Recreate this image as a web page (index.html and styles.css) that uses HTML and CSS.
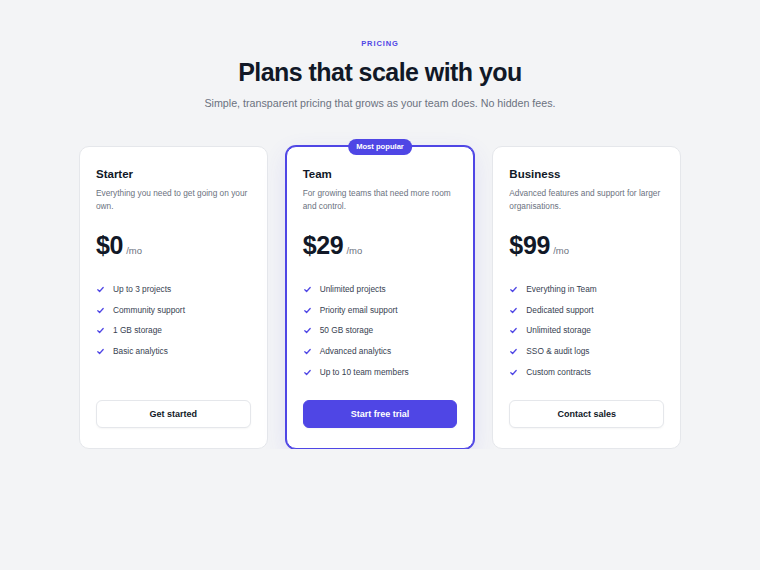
FILE: index.html
```html
<!DOCTYPE html>
<html lang="en">
<head>
  <meta charset="UTF-8">
  <meta name="viewport" content="width=device-width, initial-scale=1.0">
  <title>Pricing</title>
  <link rel="stylesheet" href="styles.css">
</head>
<body>
  <main class="pricing">
    <header class="intro">
      <p class="eyebrow">Pricing</p>
      <h1>Plans that scale with you</h1>
      <p class="lead">Simple, transparent pricing that grows as your team does. No hidden fees.</p>
    </header>

    <div class="plans">
      <div class="plan">
        <h3>Starter</h3>
        <p class="desc">Everything you need to get going on your own.</p>
        <div class="price">$0<span>/mo</span></div>
        <ul class="features">
          <li><svg viewBox="0 0 10 10"><path d="M2 5.2l2 2 4-4.4"/></svg>Up to 3 projects</li>
          <li><svg viewBox="0 0 10 10"><path d="M2 5.2l2 2 4-4.4"/></svg>Community support</li>
          <li><svg viewBox="0 0 10 10"><path d="M2 5.2l2 2 4-4.4"/></svg>1 GB storage</li>
          <li><svg viewBox="0 0 10 10"><path d="M2 5.2l2 2 4-4.4"/></svg>Basic analytics</li>
        </ul>
        <button class="btn">Get started</button>
      </div>

      <div class="plan featured">
        <span class="badge">Most popular</span>
        <h3>Team</h3>
        <p class="desc">For growing teams that need more room and control.</p>
        <div class="price">$29<span>/mo</span></div>
        <ul class="features">
          <li><svg viewBox="0 0 10 10"><path d="M2 5.2l2 2 4-4.4"/></svg>Unlimited projects</li>
          <li><svg viewBox="0 0 10 10"><path d="M2 5.2l2 2 4-4.4"/></svg>Priority email support</li>
          <li><svg viewBox="0 0 10 10"><path d="M2 5.2l2 2 4-4.4"/></svg>50 GB storage</li>
          <li><svg viewBox="0 0 10 10"><path d="M2 5.2l2 2 4-4.4"/></svg>Advanced analytics</li>
          <li><svg viewBox="0 0 10 10"><path d="M2 5.2l2 2 4-4.4"/></svg>Up to 10 team members</li>
        </ul>
        <button class="btn primary">Start free trial</button>
      </div>

      <div class="plan">
        <h3>Business</h3>
        <p class="desc">Advanced features and support for larger organisations.</p>
        <div class="price">$99<span>/mo</span></div>
        <ul class="features">
          <li><svg viewBox="0 0 10 10"><path d="M2 5.2l2 2 4-4.4"/></svg>Everything in Team</li>
          <li><svg viewBox="0 0 10 10"><path d="M2 5.2l2 2 4-4.4"/></svg>Dedicated support</li>
          <li><svg viewBox="0 0 10 10"><path d="M2 5.2l2 2 4-4.4"/></svg>Unlimited storage</li>
          <li><svg viewBox="0 0 10 10"><path d="M2 5.2l2 2 4-4.4"/></svg>SSO &amp; audit logs</li>
          <li><svg viewBox="0 0 10 10"><path d="M2 5.2l2 2 4-4.4"/></svg>Custom contracts</li>
        </ul>
        <button class="btn">Contact sales</button>
      </div>
    </div>
  </main>
</body>
</html>
```

FILE: styles.css
```css
body {
  margin: 0;
  font-family: "Liberation Sans", Arial, sans-serif;
  background-color: #f3f4f6;
  color: #111827;
}
.pricing {
  padding-top: 39px;
}
.intro {
  text-align: center;
}
.eyebrow {
  margin: 0;
  font-size: 7.5px;
  line-height: 10px;
  font-weight: 700;
  letter-spacing: 0.9px;
  text-transform: uppercase;
  color: #4f46e5;
}
h1 {
  margin: 9px 0 0;
  font-size: 25px;
  line-height: 28px;
  letter-spacing: -0.55px;
  color: #111827;
}
.lead {
  margin: 10px 0 0;
  font-size: 10.7px;
  line-height: 14px;
  color: #6b7280;
}
.plans {
  display: grid;
  grid-template-columns: repeat(3, 1fr);
  gap: 18px;
  max-width: 602px;
  margin: 36px auto 0;
}
.plan {
  position: relative;
  display: flex;
  flex-direction: column;
  padding: 19px 16px 20px;
  background-color: #fff;
  border: 1px solid #e5e7eb;
  border-radius: 10px;
}
.plan.featured {
  border-color: #4f46e5;
  box-shadow: 0 0 0 1px #4f46e5, 0 8px 24px rgba(79, 70, 229, 0.12);
}
.badge {
  position: absolute;
  top: -8px;
  left: 50%;
  transform: translateX(-50%);
  padding: 0 8px;
  height: 16px;
  line-height: 16px;
  border-radius: 999px;
  background-color: #4f46e5;
  color: #fff;
  font-size: 7.6px;
  font-weight: 700;
  white-space: nowrap;
}
.plan h3 {
  margin: 0;
  font-size: 11.5px;
  line-height: 16px;
}
.desc {
  margin: 5px 0 0;
  font-size: 8.3px;
  line-height: 13px;
  color: #6b7280;
}
.price {
  margin-top: 20px;
  font-size: 25px;
  line-height: 24px;
  font-weight: 700;
  letter-spacing: -0.3px;
}
.price span {
  margin-left: 3px;
  font-size: 9.5px;
  font-weight: 400;
  letter-spacing: 0;
  color: #6b7280;
}
.features {
  list-style: none;
  margin: 20px 0 21px;
  padding: 0;
  display: flex;
  flex-direction: column;
  gap: 7.7px;
}
.features li {
  display: flex;
  align-items: center;
  gap: 8px;
  font-size: 8.3px;
  line-height: 13px;
  color: #374151;
}
.features svg {
  width: 9px;
  height: 9px;
  flex: none;
  fill: none;
  stroke: #4f46e5;
  stroke-width: 1.4;
  stroke-linecap: round;
  stroke-linejoin: round;
}
.btn {
  margin-top: auto;
  height: 28px;
  border: 1px solid #e5e7eb;
  border-radius: 6px;
  background-color: #fff;
  color: #111827;
  font-family: inherit;
  font-size: 9px;
  font-weight: 700;
  box-shadow: 0 1px 2px rgba(0, 0, 0, 0.04);
}
.btn.primary {
  background-color: #4f46e5;
  border-color: #4f46e5;
  color: #fff;
}
```
